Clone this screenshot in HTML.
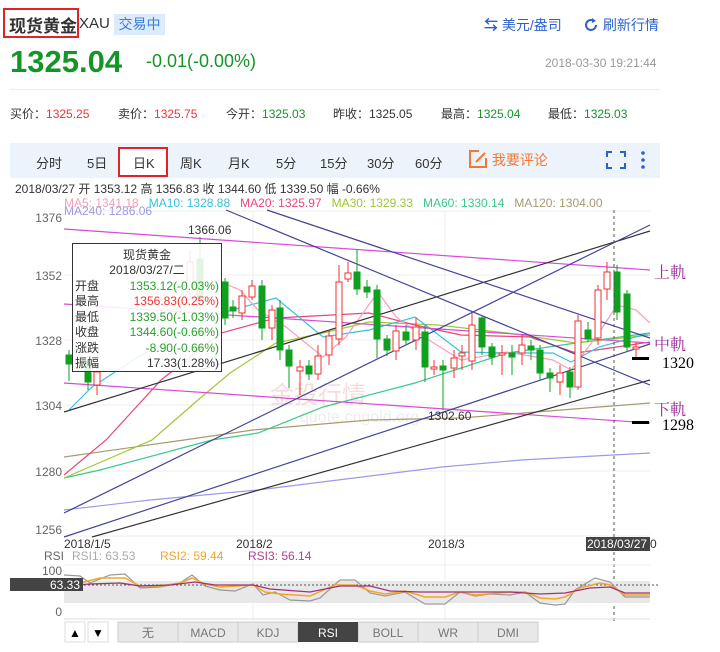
<!DOCTYPE html>
<html><head><meta charset="utf-8"><style>
body{margin:0;width:720px;height:652px;background:#fff;position:relative;overflow:hidden;font-family:"Liberation Sans","Noto Sans CJK SC",sans-serif;color:#333}
.a{position:absolute;white-space:nowrap}
</style></head><body>
<div class="a" style="left:3px;top:8px;width:72px;height:26px;border:2px solid #e0222a"></div>
<div class="a" style="left:9px;top:12px;font-size:17px;font-weight:bold;color:#333">现货黄金</div>
<div class="a" style="left:79px;top:15px;font-size:15px;color:#333">XAU</div>
<div class="a" style="left:114px;top:14px;width:51px;height:21px;background:#dcebfb;color:#3a7ed8;font-size:14px;text-align:center;line-height:21px">交易中</div>
<div class="a" style="left:484px;top:15px;font-size:14px;color:#2c62c8"><b>⇆</b> 美元/盎司</div>
<div class="a" style="left:583px;top:15px;font-size:14px;color:#2c62c8"><svg width="16" height="16" viewBox="0 0 16 16" style="vertical-align:-3px"><path d="M13 8a5 5 0 1 1-2-4" fill="none" stroke="#2c62c8" stroke-width="2"/><path d="M9 1l4 3-4 2z" fill="#2c62c8"/></svg> 刷新行情</div>
<div class="a" style="left:10px;top:44px;font-size:31px;font-weight:bold;color:#159428">1325.04</div>
<div class="a" style="left:146px;top:51px;font-size:18px;color:#159428">-0.01(-0.00%)</div>
<div class="a" style="left:545px;top:56px;font-size:12px;color:#999">2018-03-30 19:21:44</div>
<div class="a" style="left:10px;top:89px;width:650px;height:1px;background:#eee"></div>
<div class="a" style="left:10px;top:105px;font-size:12px">买价：<span style="color:#f2323a">1325.25</span></div>
<div class="a" style="left:118px;top:105px;font-size:12px">卖价：<span style="color:#f2323a">1325.75</span></div>
<div class="a" style="left:226px;top:105px;font-size:12px">今开：<span style="color:#159428">1325.03</span></div>
<div class="a" style="left:333px;top:105px;font-size:12px">昨收：1325.05</div>
<div class="a" style="left:441px;top:105px;font-size:12px">最高：<span style="color:#159428">1325.04</span></div>
<div class="a" style="left:548px;top:105px;font-size:12px">最低：<span style="color:#159428">1325.03</span></div>
<div class="a" style="left:10px;top:143px;width:650px;height:35px;background:#edf3fb"></div>
<div class="a" style="left:118px;top:147px;width:46px;height:26px;border:2px solid #e0222a;background:#fff"></div>
<div class="a" style="top:153px;left:36px;font-size:13px;color:#333">分时</div>
<div class="a" style="top:153px;left:87px;font-size:13px">5日</div>
<div class="a" style="top:153px;left:133px;font-size:13px">日K</div>
<div class="a" style="top:153px;left:180px;font-size:13px">周K</div>
<div class="a" style="top:153px;left:228px;font-size:13px">月K</div>
<div class="a" style="top:153px;left:276px;font-size:13px">5分</div>
<div class="a" style="top:153px;left:320px;font-size:13px">15分</div>
<div class="a" style="top:153px;left:367px;font-size:13px">30分</div>
<div class="a" style="top:153px;left:415px;font-size:13px">60分</div>
<div class="a" style="top:149px;left:468px;font-size:14px;color:#f07838"><svg width="20" height="20" viewBox="0 0 20 20" style="vertical-align:-4px"><path d="M11 2H2v16h16V9" fill="none" stroke="#f07838" stroke-width="2"/><path d="M8 13l9-9" stroke="#f07838" stroke-width="2"/></svg> 我要评论</div>
<svg class="a" style="left:606px;top:151px" width="20" height="18"><path d="M1 6V1h5M14 1h5v5M19 12v5h-5M6 17H1v-5" fill="none" stroke="#2c62c8" stroke-width="2"/></svg>
<svg class="a" style="left:640px;top:150px" width="6" height="20"><circle cx="3" cy="3" r="1.8" fill="#2c62c8"/><circle cx="3" cy="10" r="1.8" fill="#2c62c8"/><circle cx="3" cy="17" r="1.8" fill="#2c62c8"/></svg>
<div class="a" style="left:15px;top:180px;font-size:12px;color:#333">2018/03/27 开 1353.12 高 1356.83 收 1344.60 低 1339.50 幅 -0.66%</div>
<div class="a" style="left:64px;top:196px;font-size:12px"><span style="color:#f5a0b8">MA5: 1341.18</span> &nbsp; <span style="color:#38c0e0">MA10: 1328.88</span> &nbsp; <span style="color:#e8467a">MA20: 1325.97</span> &nbsp; <span style="color:#a0c832">MA30: 1329.33</span> &nbsp; <span style="color:#3cc88c">MA60: 1330.14</span> &nbsp; <span style="color:#a89a70">MA120: 1304.00</span></div>

<svg class="a" style="left:0;top:0" width="720" height="652" font-family="Liberation Sans,sans-serif">
<g stroke="#eee" stroke-width="1">
<line x1="64" y1="211" x2="650" y2="211"/><line x1="64" y1="275" x2="650" y2="275"/><line x1="64" y1="340" x2="650" y2="340"/><line x1="64" y1="405" x2="650" y2="405"/><line x1="64" y1="471" x2="650" y2="471"/><line x1="64" y1="536" x2="650" y2="536"/>
<line x1="253" y1="211" x2="253" y2="620"/><line x1="445" y1="211" x2="445" y2="620"/>
</g>
<g fill="#666" font-size="12" text-anchor="end">
<text x="62" y="222">1376</text><text x="62" y="280">1352</text><text x="62" y="345">1328</text><text x="62" y="410">1304</text><text x="62" y="476">1280</text><text x="62" y="534">1256</text>
</g>
<text x="64" y="215" font-size="12" fill="#9a9ae6">MA240: 1286.06</text>
<g opacity="0.35"><text x="270" y="403" font-size="24" fill="#e8a0a0" font-family="Noto Sans CJK SC,sans-serif">金投行情</text><text x="300" y="422" font-size="16" fill="#ccc">quote.cngold.org</text></g>
<g fill="none" stroke-width="1.2">
<polyline stroke="#9a9ae6" points="64,510 150,500 258,490 442,467 521,460 650,453"/>
<polyline stroke="#a89a70" points="64,457 184,440 253,430 369,420 461,418 599,407 650,403"/>
<polyline stroke="#3cc88c" points="64,478 100,470 212,440 258,433 323,407 415,383 507,353 576,343 650,333"/>
<polyline stroke="#a0c832" points="64,478 152,440 198,400 230,373 276,343 323,333 369,322 438,325 507,333 576,343 650,335"/>
<polyline stroke="#e8467a" points="64,475 106,440 161,380 221,333 276,318 369,313 415,325 461,335 530,337 576,353 650,342"/>
<polyline stroke="#38c0e0" points="69,410 92,387 138,357 221,313 276,298 323,337 369,330 415,317 461,352 507,353 553,353 571,362 599,347 650,333"/>
<polyline stroke="#f5a0b8" points="160,320 216,280 240,290 258,310 286,327 323,357 346,337 378,292 396,317 424,337 461,360 507,352 553,360 571,370 599,333 617,305 636,310 650,323"/>
</g>
<g stroke-width="1.2">
<line x1="64" y1="229" x2="650" y2="270" stroke="#d84ad8"/>
<line x1="64" y1="304" x2="650" y2="343" stroke="#d84ad8"/>
<line x1="64" y1="383" x2="650" y2="423" stroke="#d84ad8"/>
<line x1="64" y1="412" x2="650" y2="231" stroke="#333"/>
<line x1="92" y1="537" x2="650" y2="380" stroke="#333"/>
<line x1="64" y1="513" x2="650" y2="225" stroke="#44449a"/>
<line x1="64" y1="537" x2="650" y2="344" stroke="#44449a"/>
<line x1="226" y1="210" x2="650" y2="385" stroke="#44449a"/>
<line x1="267" y1="210" x2="650" y2="338" stroke="#44449a"/>
</g>
<g id="c">
<g fill="#10a020" stroke="#10a020"><line x1="69" y1="350" x2="69" y2="381"/><rect x="66" y="355" width="6" height="9"/>
<line x1="88" y1="356" x2="88" y2="390"/><rect x="85" y="362" width="6" height="20"/>
<line x1="200" y1="237" x2="200" y2="310"/><rect x="197" y="259" width="6" height="40"/>
<line x1="225" y1="278" x2="225" y2="325"/><rect x="222" y="282" width="6" height="36"/>
<line x1="233" y1="300" x2="233" y2="318"/><rect x="230" y="307" width="6" height="4"/>
<line x1="262" y1="280" x2="262" y2="340"/><rect x="259" y="286" width="6" height="42"/>
<line x1="280" y1="300" x2="280" y2="360"/><rect x="277" y="308" width="6" height="42"/>
<line x1="289" y1="345" x2="289" y2="388"/><rect x="286" y="350" width="6" height="16"/>
<line x1="309" y1="360" x2="309" y2="380"/><rect x="306" y="366" width="6" height="8"/>
<line x1="357" y1="250" x2="357" y2="295"/><rect x="354" y="272" width="6" height="17"/>
<line x1="367" y1="280" x2="367" y2="298"/><rect x="364" y="287" width="6" height="5"/>
<line x1="377" y1="285" x2="377" y2="358"/><rect x="374" y="290" width="6" height="49"/>
<line x1="387" y1="335" x2="387" y2="356"/><rect x="384" y="339" width="6" height="11"/>
<line x1="406" y1="325" x2="406" y2="345"/><rect x="403" y="332" width="6" height="8"/>
<line x1="425" y1="325" x2="425" y2="382"/><rect x="422" y="332" width="6" height="35"/>
<line x1="443" y1="360" x2="443" y2="410"/><rect x="440" y="366" width="6" height="4"/>
<line x1="482" y1="315" x2="482" y2="355"/><rect x="479" y="318" width="6" height="29"/>
<line x1="492" y1="343" x2="492" y2="365"/><rect x="489" y="347" width="6" height="10"/>
<line x1="512" y1="345" x2="512" y2="375"/><rect x="509" y="353" width="6" height="4"/>
<line x1="531" y1="340" x2="531" y2="360"/><rect x="528" y="346" width="6" height="4"/>
<line x1="540" y1="345" x2="540" y2="380"/><rect x="537" y="350" width="6" height="23"/>
<line x1="550" y1="368" x2="550" y2="392"/><rect x="547" y="373" width="6" height="5"/>
<line x1="570" y1="367" x2="570" y2="398"/><rect x="567" y="372" width="6" height="15"/>
<line x1="588" y1="322" x2="588" y2="342"/><rect x="585" y="330" width="6" height="9"/>
<line x1="617" y1="265" x2="617" y2="320"/><rect x="614" y="272" width="6" height="40"/>
<line x1="627" y1="290" x2="627" y2="352"/><rect x="624" y="294" width="6" height="53"/>
</g>
<g fill="#fff" stroke="#f03030"><line x1="97" y1="365" x2="97" y2="395"/><rect x="94" y="372" width="6" height="13"/>
<line x1="190" y1="250" x2="190" y2="300"/><rect x="187" y="262" width="6" height="30"/>
<line x1="242" y1="290" x2="242" y2="320"/><rect x="239" y="296" width="6" height="17"/>
<line x1="252" y1="280" x2="252" y2="300"/><rect x="249" y="286" width="6" height="11"/>
<line x1="272" y1="305" x2="272" y2="340"/><rect x="269" y="310" width="6" height="18"/>
<line x1="300" y1="360" x2="300" y2="395"/><rect x="297" y="367" width="6" height="4"/>
<line x1="318" y1="345" x2="318" y2="380"/><rect x="315" y="356" width="6" height="18"/>
<line x1="329" y1="330" x2="329" y2="365"/><rect x="326" y="336" width="6" height="19"/>
<line x1="339" y1="265" x2="339" y2="345"/><rect x="336" y="282" width="6" height="57"/>
<line x1="348" y1="262" x2="348" y2="282"/><rect x="345" y="273" width="6" height="6"/>
<line x1="396" y1="325" x2="396" y2="360"/><rect x="393" y="331" width="6" height="20"/>
<line x1="416" y1="318" x2="416" y2="350"/><rect x="413" y="327" width="6" height="13"/>
<line x1="434" y1="360" x2="434" y2="375"/><rect x="431" y="367" width="6" height="2"/>
<line x1="454" y1="350" x2="454" y2="378"/><rect x="451" y="358" width="6" height="10"/>
<line x1="462" y1="345" x2="462" y2="370"/><rect x="459" y="353" width="6" height="3"/>
<line x1="472" y1="313" x2="472" y2="370"/><rect x="469" y="325" width="6" height="36"/>
<line x1="502" y1="345" x2="502" y2="375"/><rect x="499" y="353" width="6" height="2"/>
<line x1="522" y1="335" x2="522" y2="365"/><rect x="519" y="345" width="6" height="8"/>
<line x1="560" y1="365" x2="560" y2="395"/><rect x="557" y="373" width="6" height="9"/>
<line x1="578" y1="315" x2="578" y2="390"/><rect x="575" y="321" width="6" height="66"/>
<line x1="598" y1="285" x2="598" y2="345"/><rect x="595" y="290" width="6" height="48"/>
<line x1="607" y1="262" x2="607" y2="300"/><rect x="604" y="272" width="6" height="17"/>
<line x1="636" y1="342" x2="636" y2="360"/><rect x="633" y="347" width="6" height="2"/>
</g>
</g>
<text x="188" y="234" font-size="12" fill="#333">1366.06</text>
<text x="428" y="420" font-size="12" fill="#333">1302.60</text>
<line x1="614" y1="210" x2="614" y2="622" stroke="#555" stroke-dasharray="3,3"/>
<g fill="#9b2d9b" font-size="16" font-family="Noto Serif CJK SC,serif"><text x="654" y="278">上軌</text><text x="654" y="350">中軌</text><text x="654" y="415">下軌</text></g>
<rect x="632" y="357" width="17" height="3" fill="#000"/><text x="662" y="368" font-size="16" font-family="Liberation Serif,serif">1320</text>
<rect x="632" y="421" width="17" height="3" fill="#000"/><text x="662" y="430" font-size="16" font-family="Liberation Serif,serif">1298</text>
<rect x="72.5" y="243.5" width="149" height="128" fill="#fff" fill-opacity="0.88" stroke="#333"/>
<g font-size="12" fill="#333"><text x="147" y="259" text-anchor="middle">现货黄金</text><text x="147" y="274" text-anchor="middle">2018/03/27/二</text>
<text x="75" y="290">开盘</text><text x="75" y="305">最高</text><text x="75" y="321">最低</text><text x="75" y="336">收盘</text><text x="75" y="352">涨跌</text><text x="75" y="367">振幅</text>
<g text-anchor="end"><text x="219" y="290" fill="#2aa02a">1353.12(-0.03%)</text><text x="219" y="305" fill="#f03030">1356.83(0.25%)</text><text x="219" y="321" fill="#2aa02a">1339.50(-1.03%)</text><text x="219" y="336" fill="#2aa02a">1344.60(-0.66%)</text><text x="219" y="352" fill="#2aa02a">-8.90(-0.66%)</text><text x="219" y="367">17.33(1.28%)</text></g></g>
<g font-size="12" fill="#333"><text x="64" y="548">2018/1/5</text><text x="236" y="548">2018/2</text><text x="428" y="548">2018/3</text></g>
<rect x="586" y="537" width="64" height="14" fill="#444"/><text x="587" y="548" font-size="12" fill="#fff">2018/03/27</text><text x="650" y="548" font-size="12" fill="#333">0</text>
<g font-size="12"><text x="44" y="560" fill="#666">RSI</text><text x="72" y="560" fill="#aaa">RSI1: 63.53</text><text x="160" y="560" fill="#f5a623">RSI2: 59.44</text><text x="248" y="560" fill="#b04090">RSI3: 56.14</text></g>
<rect x="64" y="581" width="586" height="22" fill="#e8e8e8"/>
<line x1="64" y1="565" x2="650" y2="565" stroke="#eee"/>
<g fill="#666" font-size="12" text-anchor="end"><text x="62" y="575">100</text><text x="62" y="616">0</text></g>
<line x1="64" y1="585" x2="660" y2="585" stroke="#555" stroke-dasharray="2,2"/>
<polyline fill="none" stroke="#999" stroke-width="1.2" points="64,575 80,576 90,583 110,575 125,574 140,588 160,587 180,583 192,575 205,586 220,590 235,591 253,584 263,595 275,592 290,600 310,601 320,598 340,580 355,580 370,593 385,596 405,592 425,604 445,604 460,592 475,596 490,594 510,595 525,592 540,603 555,605 565,604 575,590 595,578 610,582 625,597 650,597"/>
<polyline fill="none" stroke="#f5a623" stroke-width="1.5" points="64,580 80,583 100,578 125,578 140,586 160,586 180,583 192,578 205,584 220,587 253,585 265,592 280,594 310,596 335,585 355,585 370,591 385,594 405,591 425,597 445,597 460,592 475,595 510,592 525,592 540,598 555,599 565,597 580,588 600,583 610,585 625,595 650,595"/>
<polyline fill="none" stroke="#a0307a" stroke-width="1.3" points="64,586 90,584 120,583 140,586 170,585 195,582 215,585 253,585 270,589 310,592 340,586 370,586 390,591 420,592 460,592 510,592 540,594 565,593 590,588 610,587 625,593 650,593"/>
<rect x="10" y="578" width="73" height="13" fill="#444"/><text x="80" y="589" font-size="12" fill="#fff" text-anchor="end">63.33</text>
<line x1="64" y1="619" x2="650" y2="619" stroke="#ddd"/>
<g font-size="12" text-anchor="middle">
<rect x="65" y="622" width="20" height="20" fill="#fff" stroke="#ddd"/><text x="75" y="637">▲</text>
<rect x="88" y="622" width="20" height="20" fill="#fff" stroke="#ddd"/><text x="98" y="637">▼</text>
<g fill="#e8e8e8" stroke="#ccc"><rect x="118" y="622" width="60" height="20"/><rect x="178" y="622" width="60" height="20"/><rect x="238" y="622" width="60" height="20"/><rect x="358" y="622" width="60" height="20"/><rect x="418" y="622" width="60" height="20"/><rect x="478" y="622" width="60" height="20"/></g>
<rect x="298" y="622" width="60" height="20" fill="#444"/>
<g fill="#777"><text x="148" y="637">无</text><text x="208" y="637">MACD</text><text x="268" y="637">KDJ</text><text x="388" y="637">BOLL</text><text x="448" y="637">WR</text><text x="508" y="637">DMI</text></g>
<text x="328" y="637" fill="#fff">RSI</text></g>
</svg>
</body></html>
